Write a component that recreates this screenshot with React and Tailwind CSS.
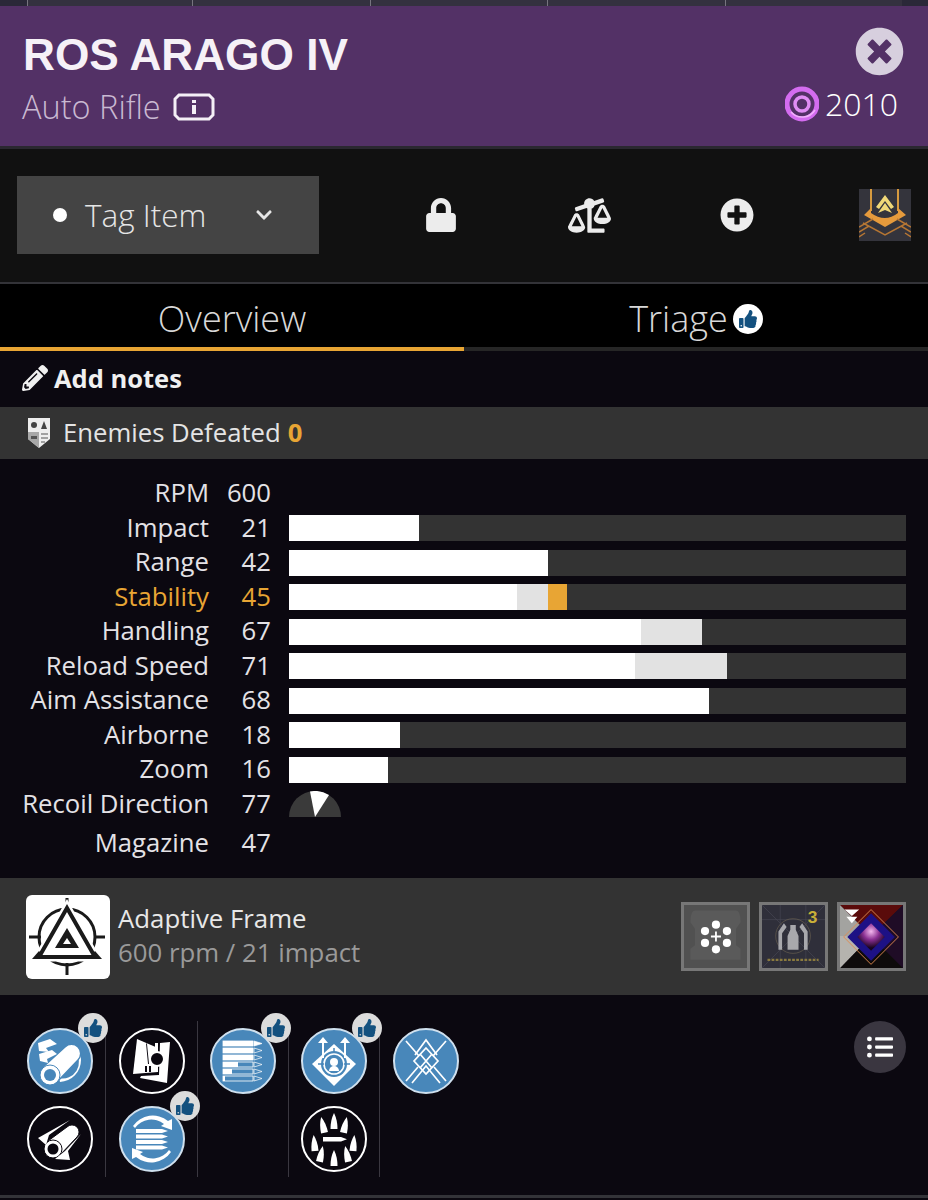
import React from "react";
import { FaLock, FaBalanceScaleLeft, FaPlusCircle, FaTimesCircle, FaPencilAlt, FaThumbsUp, FaListUl, FaChevronDown } from "react-icons/fa";

const stats = [
  { name: "Impact", value: 21, base: 21 },
  { name: "Range", value: 42, base: 42 },
  { name: "Stability", value: 45, base: 37, mid: 42, hi: true },
  { name: "Handling", value: 67, base: 57, mid: 67 },
  { name: "Reload Speed", value: 71, base: 56, mid: 71 },
  { name: "Aim Assistance", value: 68, base: 68 },
  { name: "Airborne", value: 18, base: 18 },
  { name: "Zoom", value: 16, base: 16 },
];

function StatLabel({ name, value, hi, className = "h-[34.5px]" }) {
  return (
    <div className={`flex items-center pb-[1px] ${className} ${hi ? "text-[#e8a534]" : "text-[#e4e2e6]"}`}>
      <div className="w-[209px] text-right">{name}</div>
      <div className="w-[62px] text-right">{value}</div>
    </div>
  );
}

function StatRow({ stat }) {
  return (
    <div className="flex items-center">
      <StatLabel name={stat.name} value={stat.value} hi={stat.hi} />
      <div className="ml-[18px] flex h-[26px] w-[617px] bg-[#333333]">
        <div className="bg-white" style={{ width: `${stat.base}%` }} />
        {stat.mid && stat.mid > stat.base && (
          <div className="bg-[#e2e2e2]" style={{ width: `${stat.mid - stat.base}%` }} />
        )}
        {stat.hi && <div className="bg-[#e8a534]" style={{ width: `${stat.value - stat.mid}%` }} />}
      </div>
    </div>
  );
}

function ThumbBadge() {
  return (
    <div className="absolute -right-[17px] -top-[17px] flex h-[30px] w-[30px] items-center justify-center rounded-full bg-[#dcdcdc]">
      <FaThumbsUp className="text-[18px] text-[#14517f]" />
    </div>
  );
}

function Perk({ blue, thumb, children }) {
  return (
    <div
      className={`relative h-[66px] w-[66px] rounded-full border-2 ${
        blue ? "border-[#cfe0ee] bg-[#4887ba]" : "border-white bg-[#0b0810]"
      }`}
    >
      <svg viewBox="0 0 62 62" className="h-full w-full">
        {children}
      </svg>
      {thumb && <ThumbBadge />}
    </div>
  );
}

function PerkColumn({ children, last, wide }) {
  return (
    <div className={`flex h-[156px] shrink-0 flex-col items-center gap-[12px] pt-[7px] ${wide ? "w-[92px]" : "w-[91px]"} ${last ? "" : "border-r border-[#3a3740]"}`}>
      {children}
    </div>
  );
}

function Barrel() {
  return (
    <g fill="white">
      <path d="M31 52 A22 22 0 0 0 52 30 A18 18 0 0 0 47 17 L46 22 A16 16 0 0 1 30 48 Z" />
      <path d="M13 38 L36 17 A9 9 0 0 1 49 30 L28 52 Z" stroke="#4887ba" strokeWidth="1.500" />
      <circle cx="21" cy="45" r="10" stroke="#4887ba" strokeWidth="1" />
      <circle cx="21" cy="45" r="6" fill="#4887ba" />
      <path d="M9 13 L21 9 L28 14 L17 18 L20 22 L10 21 Z" />
      <path d="M10 24 L23 20 L28 24 L18 29 L19 33 L11 31 Z" />
    </g>
  );
}

function Barrel2() {
  return (
    <g fill="white">
      <path d="M19 33 L38 19 A7 7 0 0 1 48 29 L31 47 Z" stroke="#0b0810" strokeWidth="1" />
      <circle cx="24" cy="41" r="9" stroke="#0b0810" strokeWidth="1" />
      <circle cx="24" cy="41" r="5.500" fill="#0b0810" />
      <path d="M9 30 L41 12 L20 27 L17 37 Z" />
      <path d="M52 26 L39 43 L41 52 L26 51 L36 43 Z" />
    </g>
  );
}

function Grip() {
  return (
    <g fill="white">
      <path d="M16 9 L37 18 L37 42 L12 44 Z" />
      <path d="M39 13 L49 12 L46 53 L19 48 L20 46 L38 45 Z" />
      <circle cx="36" cy="29" r="7" fill="#0b0810" stroke="white" strokeWidth="2" />
      <path d="M25 13 L27 34 L28 34 L26 14 Z M24 36h2v6h-2z M28 36h2v6h-2z" fill="#0b0810" />
      <path d="M34 13h3v8h-3z" />
    </g>
  );
}

function MagBars() {
  const rows = [
    [11, 30],
    [18, 30],
    [25, 30],
    [32, 15],
    [39, 9],
    [46, 2],
  ];
  return (
    <g>
      {rows.map(([y, w]) => (
        <g key={y}>
          <rect x="11" y={y} width="30" height="5" fill="none" stroke="white" strokeWidth="0.8" />
          <rect x="11" y={y} width={w} height="5" fill="white" />
          <path d={`M42 ${y} l8 2.5 l-8 2.5z`} fill={y < 18 ? "white" : "none"} stroke="white" strokeWidth="0.7" />
        </g>
      ))}
    </g>
  );
}

function ReloadMag() {
  return (
    <g fill="white">
      <rect x="15" y="21" width="26" height="4" />
      <rect x="15" y="26.500" width="26" height="4" />
      <rect x="15" y="32" width="26" height="4" />
      <rect x="15" y="37.500" width="26" height="4" />
      <path d="M41 21 l6 2 l-6 2z M41 26.500 l6 2 l-6 2z M41 32 l6 2 l-6 2z M41 37.500 l6 2 l-6 2z" />
      <path d="M12 18 A24 24 0 0 1 47 13 L51 11 L51 22 L40 18 L43 16 A20 20 0 0 0 14 20 Z" />
      <path d="M50 44 A24 24 0 0 1 15 49 L11 51 L11 40 L22 44 L19 46 A20 20 0 0 0 48 42 Z" />
    </g>
  );
}

function Target() {
  return (
    <g>
      <path d="M31 14 L53 34 L31 56 L9 34 Z" fill="white" />
      <circle cx="31" cy="34" r="13" fill="#4887ba" />
      <circle cx="31" cy="34" r="10" fill="none" stroke="white" strokeWidth="1.600" />
      <circle cx="31" cy="32" r="4" fill="white" />
      <path d="M26 41 a5 5 0 0 1 10 0z" fill="white" />
      <path d="M15 34h6 M41 34h6 M31 18v5" stroke="#4887ba" strokeWidth="1.500" />
      <path d="M20 28 V10 M42 28 V10" stroke="white" strokeWidth="2" />
      <path d="M15 13 l5 -6 l5 6z M37 13 l5 -6 l5 6z" fill="white" />
    </g>
  );
}

function Weave() {
  return (
    <g fill="none" stroke="white" strokeWidth="1.700">
      <path d="M11 11 L24 26 M51 11 L38 26" />
      <path d="M11 51 L23 37 M51 51 L39 37" />
      <path d="M20 25 L31 10 L42 25" />
      <path d="M17 53 L31 36 L45 53" />
      <path d="M31 18 L43 31 L31 44 L19 31 Z" />
      <path d="M25 24 L37 38 M37 24 L25 38" />
    </g>
  );
}

function Shells() {
  const tips = [
    [19, 13, -12],
    [31, 9, 0],
    [43, 13, 12],
    [11, 31, -5],
    [51, 31, 5],
    [19, 42, 12],
    [31, 46, 0],
    [43, 42, -12],
  ];
  return (
    <g fill="white">
      {tips.map(([x, y, r]) => (
        <path key={`${x}-${y}`} d={`M${x - 3.500} ${y + 12} Q${x - 3.500} ${y + 3} ${x} ${y - 4} Q${x + 3.500} ${y + 3} ${x + 3.500} ${y + 12} Z`} transform={`rotate(${r} ${x} ${y})`} />
      ))}
      <rect x="20" y="29" width="18" height="4.500" />
      <path d="M38 29 l6 2.200 l-6 2.300z" />
    </g>
  );
}

function FrameIcon() {
  return (
    <svg viewBox="0 0 84 84" className="h-full w-full">
      <g fill="none" stroke="#1a1a1a">
        <circle cx="41" cy="42" r="28" strokeWidth="3" />
        <path d="M41 3 V13 M41 68 V80 M3 42 H15 M68 42 H79" strokeWidth="3" />
      </g>
      <path d="M41 13 L13 62 H69 Z" fill="none" stroke="white" strokeWidth="9" />
      <path d="M41 13 L13 62 H69 Z" fill="none" stroke="#1a1a1a" strokeWidth="4" />
      <path d="M41 33 L53 53 H29 Z" fill="#1a1a1a" />
      <path d="M41 43 L45 49 H37 Z" fill="white" />
      <path d="M13 56 L6 64 H20 Z M69 56 L76 64 H62 Z" fill="#1a1a1a" />
    </svg>
  );
}

function SocketMod() {
  const dots = [
    [35, 21],
    [47, 28],
    [47, 41],
    [35, 48],
    [23, 41],
    [23, 28],
  ];
  return (
    <svg viewBox="0 0 69 69" className="h-full w-full bg-[#515151]">
      <path d="M7 19 Q7 6 12 6 H57 Q62 6 62 19 L57 26 V44 L62 48 V60 H7 V48 L12 44 V26 Z" fill="#5a5a5a" />
      {dots.map(([x, y]) => (
        <circle key={`${x}-${y}`} cx={x} cy={y + 0.500} r="4.500" fill="white" />
      ))}
      <path d="M35 29 V40 M29.500 34.500 H40.500" stroke="white" strokeWidth="2" />
    </svg>
  );
}

function SocketMasterwork() {
  return (
    <svg viewBox="0 0 69 69" className="h-full w-full bg-[#2f2f3a]">
      <g stroke="#474754" strokeWidth="0.700" fill="none">
        <path d="M0 0 L69 69 M69 0 L0 69 M20 0 V69 M48 0 V69 M0 16 H69" />
        <circle cx="34" cy="34" r="19" stroke="#6b6150" />
      </g>
      <path d="M31 22 h6 v5 l3 7 v15 h-12 v-15 l3 -7z" fill="#a8a8ac" />
      <path d="M24 20 l-6 9 v20 h4 V31 l5 -7z M44 20 l6 9 v20 h-4 V31 l-5 -7z" fill="#a8a8ac" />
      <path d="M6 60 H62" stroke="#8a7a3f" strokeWidth="2.500" strokeDasharray="3 1.500" />
      <text x="50" y="20" fontFamily="Liberation Sans" fontWeight="700" fontSize="19" fill="#c9b038">
        3
      </text>
    </svg>
  );
}

function SocketOrnament() {
  return (
    <svg viewBox="0 0 69 69" className="h-full w-full">
      <defs>
        <radialGradient id="orn" cx="50%" cy="30%" r="60%">
          <stop offset="0%" stopColor="#f4b8ee" />
          <stop offset="50%" stopColor="#8a2f92" />
          <stop offset="100%" stopColor="#17041d" />
        </radialGradient>
      </defs>
      <rect width="69" height="69" fill="#1a0d1e" />
      <path d="M0 0 H69 L34 34 Z" fill="#5a0b0b" />
      <path d="M0 0 L34 34 L0 69 Z" fill="#a3a3a0" />
      <path d="M0 69 H69 L34 34 Z" fill="#0e0b0b" />
      <path d="M0 69 L34 34 L0 34 Z" fill="#b5b3ae" />
      <path d="M69 0 V69 L34 34 Z" fill="#1f0c26" />
      <path d="M34 5 L64 35 L34 65 L4 35 Z" fill="none" stroke="#e08a50" strokeWidth="1" />
      <path d="M34 9 L60 35 L34 61 L8 35 Z" fill="#1d1185" />
      <path d="M34 20 L49 35 L34 50 L19 35 Z" fill="url(#orn)" />
      <path d="M5 5 H21 L13 12z M7 13 H19 L13 20z" fill="white" />
    </svg>
  );
}

function PowerIcon() {
  return (
    <svg viewBox="0 0 34 36" className="h-[36px] w-[34px]">
      <circle cx="17" cy="18" r="15" fill="none" stroke="#d46cf0" strokeWidth="5" />
      <circle cx="17" cy="18" r="7" fill="none" stroke="#e08df4" strokeWidth="3.500" />
      <path d="M6 26 A15 15 0 0 0 30 24" fill="none" stroke="#f1b2fb" strokeWidth="1.500" />
    </svg>
  );
}

function TypeIcon() {
  return (
    <svg viewBox="0 0 42 28" className="h-[28px] w-[42px]">
      <path d="M6 2 H36 L40 6 V22 L36 26 H6 L2 22 V6 Z" fill="none" stroke="#f4eff6" strokeWidth="3" />
      <rect x="19" y="12" width="4" height="9" fill="#f4eff6" />
      <rect x="19" y="7" width="4" height="3" fill="#f4eff6" />
    </svg>
  );
}

function SeasonIcon() {
  return (
    <svg viewBox="0 0 52 52" className="h-[52px] w-[52px] bg-[#34343c]">
      <path d="M12 0 V22 M39 0 V22" stroke="#d69a3f" strokeWidth="2" fill="none" />
      <path d="M26 6 L35 18 L32 20 L26 12 L20 20 L17 18 Z" fill="#f0d878" />
      <path d="M26 14 L33 24 L26 21 L19 24 Z" fill="#f0d878" />
      <path d="M5 26 L12 19 V24 Q26 34 39 24 V19 L47 26 L26 38 Z" fill="#e59a3c" />
      <path d="M4 34 L26 46 L48 34 M0 38 L14 30 M52 38 L38 30 M0 43 L10 37 M52 43 L42 37 M0 48 L6 44 M52 48 L46 44" fill="none" stroke="#b67633" strokeWidth="1.500" />
    </svg>
  );
}

function ClanShield() {
  return (
    <svg viewBox="0 0 24 32" className="h-[32px] w-[24px]">
      <path d="M1 1 H23 V22 L12 31 L1 22 Z" fill="#eeeeee" />
      <path d="M1 15 H12 V31 L1 22 Z" fill="#a8a8a8" />
      <circle cx="7" cy="8" r="3" fill="#444444" />
      <path d="M14 12 L17 4 L20 12 Z" fill="#444444" />
      <path d="M4 19 h6 v3 h-6z" fill="#555555" />
      <path d="M14 17 h7 M14 21 h7 M14 25 h4" stroke="#888888" strokeWidth="1.500" />
    </svg>
  );
}

export default function App() {
  return (
    <div className="min-h-[1200px] w-[928px] overflow-hidden bg-[#0b0810] font-['Open_Sans',sans-serif] text-white">
      <div className="flex h-[6px] bg-[#2a2838] pl-[27px]">
        {[165, 177.5, 177.5, 177.5, 177.5].map((w, i) => (
          <div key={i} className="h-full border-l border-[#77747f] bg-[#34313f]" style={{ width: `${w}px` }} />
        ))}
      </div>

      <header className="flex h-[143px] justify-between border-b-[3px] border-[#2a2830] bg-[#533166] pb-[20px] pl-[23px] pr-[22px] pt-[21px]">
        <div>
          <h1 className="font-['Liberation_Sans',sans-serif] text-[44.200px] font-bold leading-[56px] text-[#f6f1f7]">ROS ARAGO IV</h1>
          <div className="-ml-[1px] mt-[2px] flex items-center gap-[12px]">
            <span className="text-[32.500px] font-light leading-[44px] text-[#c9b9d2]">Auto Rifle</span>
            <TypeIcon />
          </div>
        </div>
        <div className="flex flex-col items-end">
          <FaTimesCircle className="text-[53px] text-[#d7cfde]" />
          <div className="mr-[8px] mt-[4px] flex items-center gap-[6px] pt-[2px]">
            <PowerIcon />
            <span className="text-[32px] font-light leading-[44px] text-white">2010</span>
          </div>
        </div>
      </header>

      <div className="flex h-[135px] items-center border-b-2 border-[#333338] bg-[#111111] pb-[1px] pl-[17px]">
        <div className="flex h-[78px] w-[302px] items-center bg-[#444444] pl-[36px] text-[#e6e6e6]">
          <span className="h-[14px] w-[14px] rounded-full bg-white" />
          <span className="ml-[18px] text-[31.500px] font-light">Tag Item</span>
          <FaChevronDown className="ml-[49px] text-[18px]" />
        </div>
        <FaLock className="ml-[105px] text-[34px] text-[#ececec]" />
        <FaBalanceScaleLeft className="ml-[110px] text-[43px] text-[#ececec]" />
        <FaPlusCircle className="ml-[109px] text-[34px] text-[#ececec]" />
        <div className="ml-[105px]">
          <SeasonIcon />
        </div>
      </div>

      <div className="flex h-[67px] bg-black">
        <div className="flex w-[464px] justify-center border-b-4 border-[#e8a534] pt-[12px] text-[36px] font-light leading-[46px] text-[#d8d8d8]">
          Overview
        </div>
        <div className="flex flex-1 items-start justify-center gap-[5px] border-b-4 border-[#262626] pt-[12px] text-[36px] font-light leading-[46px] text-[#d8d8d8]">
          <span>Triage</span>
          <span className="mt-[8px] flex h-[30px] w-[30px] items-center justify-center rounded-full bg-white">
            <FaThumbsUp className="text-[18px] text-[#14517f]" />
          </span>
        </div>
      </div>

      <div className="flex h-[56px] items-center gap-[6px] pb-[2px] pl-[22px] text-[25.500px] font-bold text-[#f0f0f0]">
        <FaPencilAlt className="text-[26px]" />
        <span>Add notes</span>
      </div>

      <div className="flex h-[52px] items-center bg-[#333333] pl-[27px] text-[25.700px] text-[#e4e4e4]">
        <ClanShield />
        <span className="ml-[12px]">Enemies Defeated</span>
        <span className="ml-[7px] font-bold text-[#e8a534]">0</span>
      </div>

      <div className="h-[419px] pt-[17.25px] text-[25.700px] leading-[34px]">
        <StatLabel name="RPM" value="600" />
        {stats.map((s) => (
          <StatRow key={s.name} stat={s} />
        ))}
        <div className="flex items-center">
          <StatLabel name="Recoil Direction" value={77} />
          <svg viewBox="0 0 52 26" className="ml-[18px] h-[26px] w-[52px]">
            <path d="M0 26 A26 26 0 0 1 52 26 Z" fill="#3a3a3a" />
            <path d="M26 26 L21 0.500 A26 26 0 0 1 40 4 Z" fill="white" />
          </svg>
        </div>
        <StatLabel name="Magazine" value={47} className="mt-[5px] h-[34.5px]" />
      </div>

      <div className="flex h-[117px] items-center bg-[#333333] pl-[26px] pr-[22px]">
        <div className="h-[84px] w-[84px] rounded-[6px] bg-white">
          <FrameIcon />
        </div>
        <div className="ml-[8px] pb-[4px]">
          <div className="text-[25.800px] leading-[34px] text-[#e8e8e8]">Adaptive Frame</div>
          <div className="text-[25.800px] leading-[34px] text-[#9a9a9a]">600 rpm / 21 impact</div>
        </div>
        <div className="ml-auto flex gap-[9px]">
          <div className="h-[69px] w-[69px] border-[3px] border-[#777777]">
            <SocketMod />
          </div>
          <div className="h-[69px] w-[69px] border-[3px] border-[#777777]">
            <SocketMasterwork />
          </div>
          <div className="h-[69px] w-[69px] border-[3px] border-[#777777]">
            <SocketOrnament />
          </div>
        </div>
      </div>

      <div className="flex h-[203px] items-start justify-between border-b-[3px] border-[#333338] pl-[15px] pr-[22px] pt-[26px]">
        <div className="flex">
          <PerkColumn>
            <Perk blue thumb>
              <Barrel />
            </Perk>
            <Perk>
              <Barrel2 />
            </Perk>
          </PerkColumn>
          <PerkColumn wide>
            <Perk>
              <Grip />
            </Perk>
            <Perk blue thumb>
              <ReloadMag />
            </Perk>
          </PerkColumn>
          <PerkColumn>
            <Perk blue thumb>
              <MagBars />
            </Perk>
          </PerkColumn>
          <PerkColumn>
            <Perk blue thumb>
              <Target />
            </Perk>
            <Perk>
              <Shells />
            </Perk>
          </PerkColumn>
          <PerkColumn last>
            <Perk blue>
              <Weave />
            </Perk>
          </PerkColumn>
        </div>
        <div className="flex h-[52px] w-[52px] items-center justify-center rounded-full bg-[#3a3640]">
          <FaListUl className="text-[26px] text-white" />
        </div>
      </div>
    </div>
  );
}
